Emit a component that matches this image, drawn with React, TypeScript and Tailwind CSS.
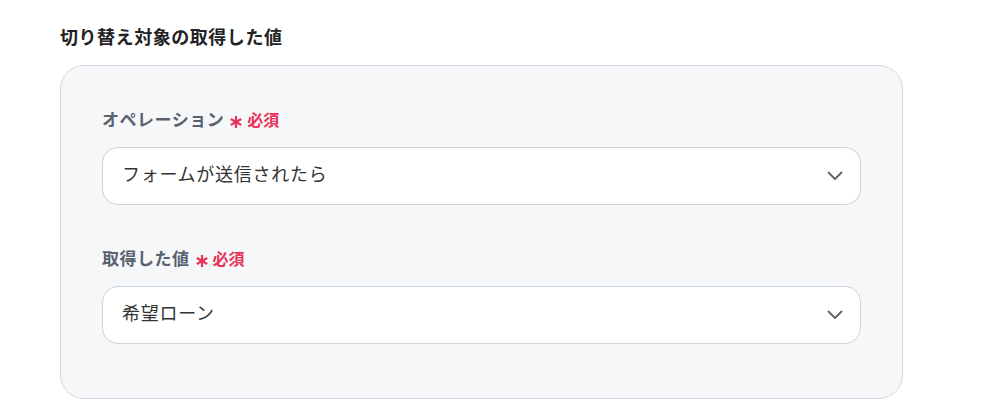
import React from "react";

function Chevron() {
  return (
    <svg width="16" height="10" viewBox="0 0 16 10" fill="none" className="shrink-0">
      <path d="M1.5 1.5 L8 8 L14.5 1.5" stroke="#5f6368" strokeWidth="1.8" strokeLinecap="round" strokeLinejoin="round" />
    </svg>
  );
}

function Star() {
  return (
    <svg width="14" height="14" viewBox="0 0 14 14" fill="none" className="shrink-0">
      <g stroke="#e8325a" strokeWidth="2.2" strokeLinecap="butt">
        <line x1="7" y1="1" x2="7" y2="13" />
        <line x1="1.8" y1="4" x2="12.2" y2="10" />
        <line x1="1.8" y1="10" x2="12.2" y2="4" />
      </g>
    </svg>
  );
}

function Field({ label, value }: { label: string; value: string }) {
  return (
    <div className="flex flex-col">
      <div className="flex items-center h-[24px]">
        <span className="text-[17px] font-bold text-[#5a6270] tracking-[0.03em] mb-[2px]">{label}</span>
        <span className="ml-[5px] mt-[4px]"><Star /></span>
        <span className="ml-[4px] text-[16px] font-bold text-[#e8325a] mb-[2px]">必須</span>
      </div>
      <div className="mt-[15px] h-[58px] bg-white border border-[#cdd3dc] rounded-[16px] flex items-center justify-between pl-[19px] pr-[17px]">
        <span className="text-[18px] text-[#333333] tracking-[0.04em] mb-[5px]">{value}</span>
        <Chevron />
      </div>
    </div>
  );
}

export default function App() {
  return (
    <div className="w-[990px] h-[415px] bg-white" style={{ fontFamily: '"Noto Sans CJK JP", "Noto Sans", sans-serif' }}>
      <div className="pl-[60px] pt-[24px] w-[903px]">
        <div className="text-[18px] font-bold text-[#222222] leading-[24px] tracking-[0.03em]">切り替え対象の取得した値</div>
        <div className="mt-[17px] bg-[#f5f7f9] border border-[#d3d8df] rounded-[24px] pl-[41px] pr-[41px] pt-[42px] pb-[54px] flex flex-col gap-[42px]">
          <Field label="オペレーション" value="フォームが送信されたら" />
          <Field label="取得した値" value="希望ローン" />
        </div>
      </div>
    </div>
  );
}
